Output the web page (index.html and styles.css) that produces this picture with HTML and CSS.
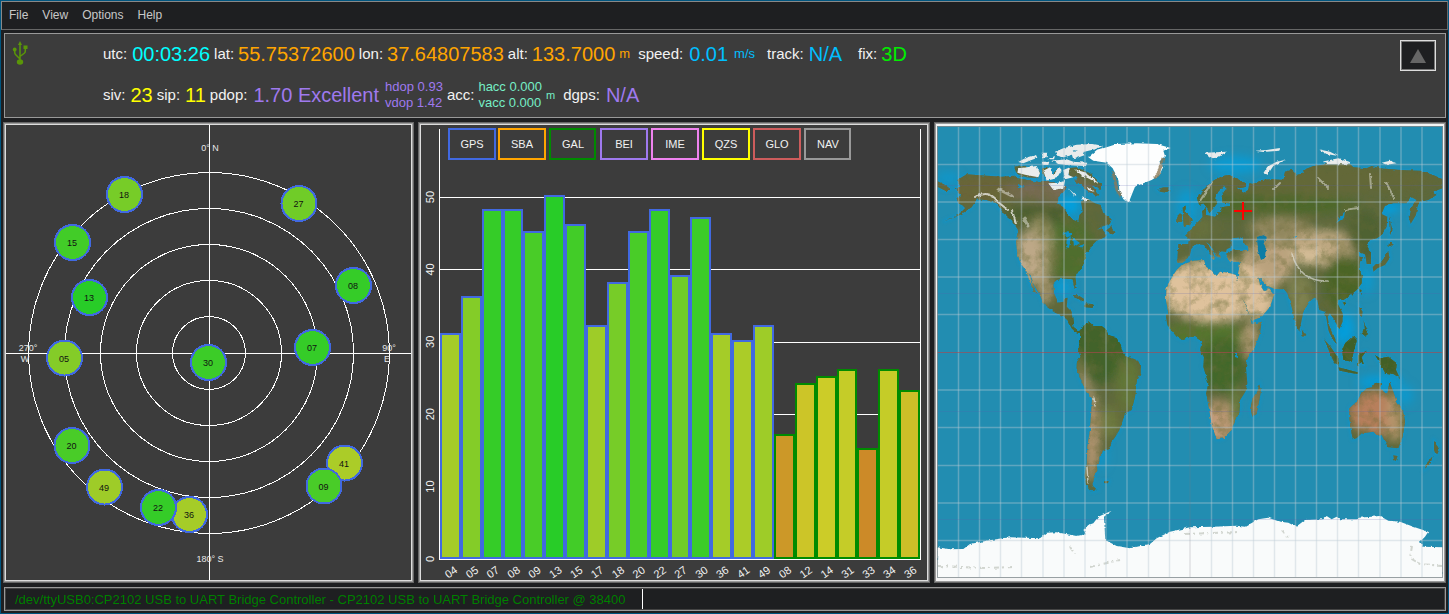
FILE: index.html
```html
<!DOCTYPE html>
<html lang="en">
<head>
<meta charset="utf-8">
<title>GNSS Monitor</title>
<link rel="stylesheet" href="styles.css">
</head>
<body>
<nav class="menubar">
  <button class="menu" type="button">File</button>
  <button class="menu" type="button">View</button>
  <button class="menu" type="button">Options</button>
  <button class="menu" type="button">Help</button>
</nav>

<header class="banner">
  <svg class="usb" viewBox="0 0 16 25" aria-label="USB connected">
    <g fill="none" stroke="#5a9608" stroke-width="1.500">
      <path d="M8 3V20M8 18L3.500 13.500Q2.700 12.700 2.700 11V9M8 15.500L12.500 12Q13.300 11.200 13.300 10V7"/>
    </g>
    <g fill="#5a9608">
      <path d="M8 0L10 4H6Z"/><circle cx="2.700" cy="8.500" r="1.900"/><rect x="11.500" y="4.500" width="4" height="3.500"/><ellipse cx="8" cy="21" rx="3.200" ry="2.700"/>
    </g>
  </svg>
  <div class="readings">
    <div class="row">
      <span class="field loose"><span>utc:</span><b class="cyan">00:03:26</b></span>
      <span class="field"><span>lat:</span><b class="orange">55.75372600</b></span>
      <span class="field"><span>lon:</span><b class="orange">37.64807583</b></span>
      <span class="field unit-near"><span>alt:</span><b class="orange">133.7000</b><small class="orange">m</small></span>
      <span class="field looser unit-far"><span>speed:</span><b class="sky">0.01</b><small class="sky">m/s</small></span>
      <span class="field loose wide"><span>track:</span><b class="sky">N/A</b></span>
      <span class="field"><span>fix:</span><b class="green">3D</b></span>
    </div>
    <div class="row">
      <span class="field loose"><span>siv:</span><b class="yellow">23</b></span>
      <span class="field loose"><span>sip:</span><b class="yellow">11</b></span>
      <span class="field looser"><span>pdop:</span><b class="purple">1.70 Excellent</b><span class="pair purple"><span>hdop 0.93</span><span>vdop 1.42</span></span></span>
      <span class="field unit-near"><span>acc:</span><span class="pair aqua"><span>hacc 0.000</span><span>vacc 0.000</span></span><small class="tiny aqua">m</small></span>
      <span class="field looser"><span>dgps:</span><b class="purple">N/A</b></span>
    </div>
  </div>
  <button class="toggle" type="button" aria-label="Hide details"><svg viewBox="0 0 16 14"><path d="M8 0L16 14H0Z" fill="#666"/></svg></button>
</header>

<main class="widgets">
  <section class="panel" aria-label="Satellite view">
    <svg id="sky" class="plot" viewBox="6 125 405 455">
      <g class="grid-line">
        <path d="M209.500 125V580M6 353.500H411"/>
        <circle cx="209" cy="353" r="36.500"/><circle cx="209" cy="353" r="72.500"/><circle cx="209" cy="353" r="108.500"/><circle cx="209" cy="353" r="144.500"/><circle cx="209" cy="353" r="180.500"/>
      </g>
      <g class="compass">
        <text x="210" y="151">0° N</text><text x="210" y="562">180° S</text>
        <text x="28" y="351">270°</text><text x="25" y="362">W</text>
        <text x="389" y="351">90°</text><text x="387" y="362">E</text>
      </g>
    </svg>
  </section>

  <section class="panel" aria-label="Signal levels">
    <svg id="levels" class="plot" viewBox="421 125 506 455">
      <path class="grid-line" d="M439.500 129V559.500H920.500V129M440 197.500H920M440 269.500H920M440 342.500H920M440 414.500H920M440 486.500H920"/>
    </svg>
  </section>

  <section class="panel map-panel" aria-label="World map">
    <svg class="map" viewBox="937 126 506 452" preserveAspectRatio="none">
      <defs>
        <path id="namerica" transform="translate(930 120) scale(.33333)" d="M82 180L110 163L150 166L215 170L255 167L262 175L320 185L345 183L385 190L410 205L385 232L383 250L400 262L415 285L430 300L445 306L448 285L458 275L453 245L470 235L495 250L512 255L520 280L545 298L540 312L515 320L500 330L515 325L530 345L525 352L500 362L490 372L478 390L468 400L462 430L445 455L436 470L440 505L434 508L428 478L400 475L380 480L370 490L372 520L385 548L400 545L402 535L413 533L410 560L425 575L428 600L430 620L445 632L455 632L452 642L440 640L425 625L412 600L400 590L375 578L342 555L330 525L312 495L302 465L296 460L310 495L320 523L312 515L300 490L290 455L272 430L262 400L258 365L264 330L245 300L220 280L200 250L170 240L140 238L125 262L90 285L40 305L85 284L108 262L85 250L80 235L95 225L75 205L92 200ZM22 183L45 195L62 208L50 214L22 200ZM530 330L545 318L547 330L558 340L540 345ZM682 208L700 202L715 202L722 210L708 218L690 215ZM425 525L445 526L464 538L458 546L440 533ZM466 550L490 553L488 564L466 562ZM738 305L742 288L750 280L757 285L753 305Z"/>
        <path id="baffin" transform="translate(930 120) scale(.33333)" d="M410 145L440 142L480 160L518 195L512 208L485 195L508 225L498 230L470 210L455 195L435 185L440 170L420 170ZM252 140L275 135L300 145L330 155L325 175L290 172L260 162ZM335 150L350 140L370 160L385 145L380 165L360 180L345 172Z"/>
        <path id="samerica" transform="translate(930 350) scale(.33333)" d="M450 -52L460 -72L478 -84L490 -72L515 -72L528 -62L535 -45L558 -38L570 -20L578 5L590 20L615 28L633 45L632 70L620 95L615 140L605 180L585 190L577 215L568 240L555 262L545 275L540 292L518 302L515 315L508 320L508 335L500 345L502 362L492 378L490 395L486 405L502 420L485 424L468 405L464 375L470 340L472 290L480 240L484 180L486 145L468 125L455 95L440 55L441 35L452 20L443 -5L450 -25ZM522 394L536 393L534 400L524 400Z"/>
        <path id="eurasia" transform="translate(1180 120) scale(.33333)" d="M52 240L55 225L75 205L95 185L120 170L148 165L195 188L198 200L180 205L165 200L190 218L205 210L208 190L220 192L245 180L275 178L310 180L315 155L335 150L350 165L372 160L370 150L400 138L440 133L510 132L520 142L560 145L575 138L600 145L660 150L720 152L760 165L788 178L788 205L760 215L770 225L745 240L718 245L712 262L708 285L692 312L686 290L690 265L710 240L695 232L680 250L640 250L615 258L605 282L622 290L620 320L605 345L590 355L570 360L560 375L573 400L573 432L560 432L556 405L545 400L535 398L538 410L550 412L540 425L538 440L545 465L545 490L530 510L505 530L490 540L475 538L472 550L488 580L488 605L478 628L468 610L455 590L450 580L443 590L448 620L465 655L470 672L455 655L445 630L440 600L435 575L418 570L412 540L400 535L388 545L370 575L363 610L358 635L348 615L335 560L322 520L312 508L285 507L262 497L250 485L235 472L240 495L252 514L264 505L282 525L270 560L245 590L215 602L205 575L185 530L172 495L174 465L180 430L178 425L150 425L140 410L145 395L165 390L205 390L205 380L190 368L188 352L155 355L155 380L140 388L138 396L118 393L122 415L108 408L90 375L78 365L100 398L97 410L72 375L50 372L35 385L28 410L15 420L5 428L-5 428L-8 415L-5 372L25 372L28 358L15 345L40 320L60 300L68 290L65 270L78 265L78 285L105 290L120 275L125 262L150 258L150 250L128 248L125 225L140 205L135 195L115 215L105 235L115 245L100 265L88 280L80 262L70 250L58 255ZM8 262L18 260L14 275L22 282L38 300L30 315L12 320L10 300Z"/>
        <path id="islands" transform="translate(1180 120) scale(.33333)" d="M625 392L629 415L615 435L592 445L580 455L578 440L600 430L615 410ZM628 362L642 372L632 382L625 378ZM627 288L632 310L638 330L630 345ZM538 508L545 510L541 526ZM488 545L497 542L494 557ZM365 628L376 645L368 652ZM538 560L548 575L546 592L538 582ZM550 600L562 630L558 650L545 640L555 625ZM487 690L495 670L520 648L530 660L520 700L515 725L490 720ZM432 658L450 678L475 715L475 740L460 722ZM475 742L530 756L530 762L478 752ZM535 705L560 692L545 712L552 735L540 725L535 740ZM585 705L600 715L625 710L650 730L648 750L660 775L640 762L615 758L600 730ZM92 412L105 410L102 420Z"/>
        <path id="africa" transform="translate(1180 120) scale(.33333)" d="M5 435L40 422L72 420L78 440L95 452L110 468L120 455L150 460L168 465L175 495L190 545L210 590L215 612L245 605L240 640L225 680L200 720L198 745L202 790L196 815L180 840L178 880L165 900L155 930L130 955L110 958L95 915L88 870L78 820L85 790L70 740L72 712L60 690L67 665L45 650L30 650L10 660L-10 650L-38 615L-42 590L-35 580L-42 540L-40 500L-20 465L-10 450ZM238 793L243 812L230 882L217 890L211 865L218 835L232 815Z"/>
        <path id="australia" transform="translate(1180 350) scale(.33333)" d="M508 175L530 155L545 130L560 115L575 112L585 98L605 100L600 115L622 135L628 93L640 125L650 155L670 185L675 215L668 260L655 295L625 292L612 270L605 255L595 258L580 245L545 250L530 265L518 268L512 235L508 205ZM640 316L653 318L648 333L642 330ZM762 272L778 292L768 315L762 300ZM758 318L752 340L735 356L740 340Z"/>
        <path id="greenland" transform="translate(930 120) scale(.33333)" d="M475 112L500 90L530 82L560 72L620 70L680 72L722 84L700 92L705 108L688 125L700 140L688 165L665 180L640 190L615 200L605 225L597 245L580 238L568 212L565 180L548 145L530 128L490 122Z"/>
        <path id="arctic" transform="translate(930 120) scale(.33333)" d="M265 126L285 115L318 105L322 113L280 130ZM335 98L352 98L350 112L338 112ZM352 118L375 108L372 118ZM375 95L400 85L425 88L440 100L400 112L385 108ZM400 85L440 74L490 72L520 78L495 88L460 96L465 105L430 118L425 102L440 92ZM365 122L410 118L430 125L472 128L468 138L420 136L385 132ZM335 125L358 125L355 135L338 135ZM265 145L320 138L330 160L325 172L285 164L262 158ZM340 152L360 142L370 165L388 142L395 150L380 175L350 182ZM400 150L420 142L415 165L430 172L405 178ZM432 148L470 158L508 192L480 178L455 165ZM470 200L495 217L475 210ZM415 205L440 228L432 225ZM355 190L385 188L405 182L400 205L370 210ZM455 232L480 240L465 245ZM825 98L890 95L855 118L840 110ZM1000 160L1012 140L1040 125L1068 118L1030 138L1012 165ZM1165 88L1200 95L1225 108L1190 102ZM1175 125L1225 115L1258 125L1255 133L1190 133ZM975 92L1010 90L1050 84L1048 92L1000 96ZM1355 128L1380 122L1400 130L1370 134Z"/>
        <path id="antarctica" transform="translate(930 350) scale(.33333)" d="M22 592L60 598L100 597L120 582L170 572L240 562L330 565L350 548L380 547L440 558L470 552L460 540L475 525L490 520L505 500L545 482L522 500L526 570L560 588L600 595L660 582L680 565L720 545L780 532L850 530L920 527L945 530L985 508L1015 503L1050 515L1075 518L1098 530L1125 510L1180 508L1190 498L1205 508L1220 500L1230 508L1280 508L1290 503L1350 498L1375 512L1410 515L1450 530L1495 545L1485 560L1470 575L1480 590L1540 592V700H20Z"/>
        <g id="land"><use href="#namerica"/><use href="#baffin"/><use href="#samerica"/><use href="#eurasia"/><use href="#islands"/><use href="#africa"/><use href="#australia"/></g>
        <clipPath id="land-clip"><use href="#namerica"/><use href="#baffin"/><use href="#samerica"/><use href="#eurasia"/><use href="#islands"/><use href="#africa"/><use href="#australia"/></clipPath>
        <filter id="soft" x="-30%" y="-30%" width="160%" height="160%"><feGaussianBlur stdDeviation="5"/></filter>
        <filter id="shelf"><feGaussianBlur stdDeviation="1.500"/></filter>
        <filter id="rough" filterUnits="userSpaceOnUse" x="937" y="126" width="506" height="452"><feTurbulence type="fractalNoise" baseFrequency=".25" numOctaves="2" seed="4" result="n"/><feDisplacementMap in="SourceGraphic" in2="n" scale="3" xChannelSelector="R" yChannelSelector="G"/><feGaussianBlur stdDeviation=".3"/></filter>
        <filter id="relief" filterUnits="userSpaceOnUse" x="937" y="126" width="506" height="452"><feTurbulence type="fractalNoise" baseFrequency=".08" numOctaves="5" seed="8"/><feColorMatrix values="0 0 0 0 .14  0 0 0 0 .15  0 0 0 0 .04  2.600 0 0 0 -1.100"/></filter>
      </defs>

      <rect x="937" y="126" width="506" height="452" fill="#228db1"/>
      <g filter="url(#soft)" fill="#06a0e0">
        <ellipse cx="1070" cy="205" rx="10" ry="10"/><ellipse cx="1235" cy="165" rx="26" ry="9" opacity=".7"/><ellipse cx="1187" cy="207" rx="10" ry="18" opacity=".6"/><ellipse cx="1062" cy="287" rx="10" ry="8" opacity=".7"/><ellipse cx="948" cy="178" rx="12" ry="7" opacity=".5"/><ellipse cx="1344" cy="329" rx="10" ry="16" opacity=".9"/><ellipse cx="1366" cy="280" rx="7" ry="14" opacity=".6"/><ellipse cx="1380" cy="382" rx="22" ry="6" opacity=".9"/><ellipse cx="1405" cy="395" rx="8" ry="10" opacity=".6"/><ellipse cx="1388" cy="208" rx="12" ry="5"/><ellipse cx="1102" cy="455" rx="6" ry="14" opacity=".4"/>
      </g>
      <g filter="url(#shelf)" fill="none" stroke="#0798d5" stroke-width="8" opacity=".6"><use href="#land"/></g>

      <g filter="url(#rough)">
        <g clip-path="url(#land-clip)">
          <rect x="937" y="126" width="506" height="452" fill="#5c683c"/>
          <g filter="url(#soft)">
            <ellipse cx="985" cy="190" rx="45" ry="14" fill="#6b6538"/>
            <ellipse cx="1050" cy="190" rx="45" ry="12" fill="#776c52"/>
            <ellipse cx="1040" cy="215" rx="35" ry="9" fill="#4c5f2d"/>
            <ellipse cx="1070" cy="250" rx="25" ry="32" fill="#4f6e2f"/>
            <ellipse cx="1040" cy="250" rx="14" ry="34" fill="#948f62"/>
            <ellipse cx="1029" cy="258" rx="15" ry="26" fill="#bda887"/>
            <ellipse cx="1045" cy="290" rx="8" ry="14" fill="#ad9975"/>
            <ellipse cx="1098" cy="345" rx="35" ry="38" fill="#42642a"/>
            <ellipse cx="1128" cy="385" rx="12" ry="28" fill="#647738"/>
            <ellipse cx="1092" cy="440" rx="7" ry="42" fill="#b59672"/>
            <ellipse cx="1110" cy="422" rx="10" ry="16" fill="#6e7a3f"/>
            <path d="M1073 350L1088 402L1098 404L1083 370Z" fill="#b49b77"/>
            <ellipse cx="1190" cy="228" rx="25" ry="15" fill="#66703e"/>
            <ellipse cx="1310" cy="180" rx="130" ry="14" fill="#646838"/>
            <ellipse cx="1270" cy="205" rx="90" ry="10" fill="#4d672b"/>
            <ellipse cx="1280" cy="228" rx="32" ry="11" fill="#93885e"/>
            <ellipse cx="1268" cy="262" rx="26" ry="24" fill="#baa27d"/>
            <ellipse cx="1322" cy="248" rx="38" ry="18" fill="#bca67f"/>
            <ellipse cx="1310" cy="256" rx="18" ry="8" fill="#d6be98"/>
            <ellipse cx="1300" cy="295" rx="13" ry="22" fill="#7e8150"/>
            <ellipse cx="1344" cy="282" rx="20" ry="28" fill="#4b6528"/>
            <ellipse cx="1365" cy="234" rx="18" ry="24" fill="#4f6232"/>
            <ellipse cx="1375" cy="352" rx="45" ry="26" fill="#3f6128"/>
            <ellipse cx="1213" cy="290" rx="54" ry="31" fill="#dfc29c"/>
            <ellipse cx="1258" cy="298" rx="17" ry="22" fill="#dcbf99"/>
            <ellipse cx="1205" cy="335" rx="45" ry="14" fill="#55752d"/>
            <ellipse cx="1223" cy="365" rx="22" ry="28" fill="#436829"/>
            <ellipse cx="1250" cy="340" rx="8" ry="18" fill="#b29b75"/>
            <ellipse cx="1218" cy="422" rx="17" ry="22" fill="#c09a77"/>
            <ellipse cx="1236" cy="407" rx="7" ry="22" fill="#687b40"/>
            <ellipse cx="1256" cy="402" rx="5" ry="16" fill="#9b8560"/>
            <ellipse cx="1376" cy="413" rx="27" ry="22" fill="#b77f5c"/>
            <ellipse cx="1394" cy="417" rx="8" ry="25" fill="#b6956c"/>
            <ellipse cx="1404" cy="420" rx="4" ry="24" fill="#6b733f"/>
          </g>
          <rect x="937" y="126" width="506" height="452" filter="url(#relief)" opacity=".5"/>
          <g fill="none" stroke="#e8e8e2" stroke-linecap="round">
            <path d="M975 197Q990 189 998 202L1008 210M1012 210L1016 224" stroke-width="2" opacity=".8"/><path d="M998 189L1012 196M1024 218L1028 226" stroke-width="3" opacity=".5"/>
            <path d="M1292 254Q1300 282 1328 281" stroke-width="1.500" opacity=".6"/><path d="M1094 398L1095 406M1087 467L1088 483" stroke-width="1.500" opacity=".7"/><path d="M1200 201L1212 182M1318 178L1328 188M1386 182L1394 198M1370 174L1371 188M1345 210L1358 208M1274 189L1280 183" stroke-width="2" opacity=".5"/>
          </g>
        </g>
        <g fill="#0f91c5">
          <path d="M1257 237L1263 235L1267 237L1263 242L1266 248L1265 258L1261 260L1258 251Z" fill="#0d7da6"/>
          <path d="M1062 234L1068 231L1072 234L1069 237ZM1067 239L1071 236L1069 248L1066 247ZM1073 238L1080 243L1074 247ZM1078 246L1085 244L1082 248ZM1336 223L1345 211L1344 218ZM1293 236L1297 236L1296 238ZM1235 353L1238 353L1238 358L1235 357ZM1018 184L1025 187L1018 188Z"/>
        </g>
        <use href="#greenland" fill="#fdfefe"/>
        <use href="#arctic" fill="#e9ecec"/>
        <use href="#antarctica" fill="#f9fbfb"/>
        <g fill="none" stroke="#8d7a58" stroke-width="3" opacity=".8"><path d="M1113 172L1117 190L1121 196M1163 158L1158 175L1154 178"/></g>
        <path d="M938 566L985 568L1014 567M1090 567L1120 560M1070 547L1075 554M1185 534L1240 532M1282 530L1288 537M1412 546L1410 558L1420 564L1442 566" fill="none" stroke="#a9b0a4" stroke-width="2" stroke-dasharray="5 3 2 4" opacity=".5"/>
      </g>

      <g fill="none" stroke="#bccbd4" stroke-opacity=".4" stroke-width="1.500">
        <path d="M958.500 127V577M979.500 127V577M1000.500 127V577M1021.500 127V577M1043 127V577M1064 127V577M1085 127V577M1106 127V577M1127 127V577M1148.500 127V577M1169.500 127V577M1211.500 127V577M1232.500 127V577M1253.500 127V577M1274.500 127V577M1295.500 127V577M1316.500 127V577M1337.500 127V577M1358.500 127V577M1380 127V577M1401 127V577M1422 127V577"/>
        <path d="M937 164.500H1443M937 202H1443M937 239.500H1443M937 277H1443M937 314.500H1443M937 390H1443M937 427.500H1443M937 465.500H1443M937 503H1443M937 540.500H1443"/>
      </g>
      <path d="M1190 127V577" stroke="#778" stroke-opacity=".3"/>
      <path d="M937 352.500H1443" stroke="#b0464c" stroke-opacity=".6"/>
      <path d="M937 293.500H1443M937 411.500H1443M937 185.500H1443M937 519.500H1443" stroke="#5b5fae" stroke-opacity=".2"/>
      <rect x="937.500" y="126.500" width="505" height="451" fill="none" stroke="#808a8d" stroke-opacity=".8"/>
      <path d="M1234 211H1252M1243 202V220" stroke="#f00" stroke-width="2"/>
    </svg>
  </section>
</main>

<footer class="status"><span class="port">/dev/ttyUSB0:CP2102 USB to UART Bridge Controller - CP2102 USB to UART Bridge Controller @ 38400</span></footer>
<script src="plots.js"></script>
</body>
</html>
```

FILE: styles.css
```css
* { box-sizing: border-box; }

body {
  margin: 0;
  height: 100vh;
  min-height: 400px;
  display: flex;
  flex-direction: column;
  border: 1px solid #00557f;
  padding-bottom: 2px;
  background: #1e1f21;
  color: #f2f2f2;
  font-family: "Liberation Sans", Arial, sans-serif;
}

button { font: inherit; color: inherit; background: none; border: 0; padding: 0; }

.menubar {
  display: flex;
  align-items: center;
  gap: 14px;
  height: 29px;
  padding: 0 7px 2px;
  border: 1px solid #666;
  border-top-color: #888;
  border-left-color: #888;
}

.menu { font-size: 12px; line-height: 16px; color: #c8c8c8; }

.banner {
  display: grid;
  grid-template-columns: 98px 1fr auto;
  align-items: start;
  margin: 3px 2px 4px 3px;
  padding-right: 9px;
  padding-bottom: 1px;
  border: 1px solid #999;
  background: #3c3c3c;
}

.usb { width: 16px; height: 25px; margin: 7px 0 0 7px; }

.row { display: flex; align-items: center; gap: 4px; height: 41px; padding-bottom: 1px; }

.field { display: flex; align-items: center; gap: 4px; font-size: 15px; line-height: 20px; white-space: nowrap; }
.field b { font-size: 20px; font-weight: normal; }
.field small { font-size: 13px; }
.field .tiny { font-size: 11px; }
.loose { gap: 5px; }
.looser { gap: 6px; }
.unit-near { margin-right: 4px; }
.unit-far { margin-right: 8px; }
.wide { margin-right: 12px; }

.pair { display: flex; flex-direction: column; font-size: 13px; line-height: 16px; }

.cyan { color: #0ff; }
.orange { color: #ffa500; }
.sky { color: #00bfff; }
.green { color: #00ee00; }
.yellow { color: #ff0; }
.purple { color: #9f79ee; }
.aqua { color: #76eec6; }

.toggle {
  display: grid;
  place-items: center;
  width: 36px;
  height: 31px;
  margin-top: 6px;
  border: 1px solid #ddd;
  background: #1e1f21;
  box-shadow: inset 0 0 0 1px #777;
}
.toggle svg { width: 16px; height: 14px; }

.widgets {
  flex: 1;
  min-height: 0;
  display: grid;
  grid-template-columns: 411fr 512fr 512fr;
  grid-template-rows: minmax(0, 1fr);
  gap: 4px;
  margin: 0 2px 4px;
}

.panel {
  display: flex;
  min-width: 0;
  border: 1px solid #666;
  outline: 1px solid #999;
  outline-offset: -2px;
  padding: 2px;
  background: #3c3c3c;
  box-shadow: inset 0 0 0 2px #ddd;
}

.plot, .map { display: block; flex: 1; min-width: 0; width: 100%; height: 100%; }
.map-panel { padding: 3px 2px 4px; box-shadow: inset 0 0 0 4px #f4f4f4; }

.grid-line { fill: none; stroke: #fff; stroke-width: 1; shape-rendering: crispEdges; }
.compass text, .sat text { font-size: 9px; text-anchor: middle; }
.compass text { fill: #e8e8e8; }
.sat circle { stroke: #4169e1; stroke-width: 2; shape-rendering: crispEdges; }
.sat text { fill: #111; }
.bar, .key rect { stroke-width: 2; shape-rendering: crispEdges; }
.key rect { fill: #3c3c3c; }
.key text, .tick { font-size: 11px; text-anchor: middle; fill: #f2f2f2; }

.status {
  display: flex;
  height: 24px;
  margin: 0 2px 0 3px;
  padding-left: 10px;
  border: 1px solid #999;
  outline: 1px solid #444;
  outline-offset: -2px;
}

.port {
  margin: 1px 0;
  padding-right: 16px;
  border-right: 1px solid #fff;
  font-size: 13px;
  line-height: 22px;
  color: #008000;
  white-space: nowrap;
}
```

FILE: plots.js
```js
const NS = "http://www.w3.org/2000/svg";

function add(parent, tag, attrs, text) {
  const node = document.createElementNS(NS, tag);
  for (const key in attrs) node.setAttribute(key, attrs[key]);
  if (text !== undefined) node.textContent = text;
  parent.appendChild(node);
  return node;
}

// Signal strength to colour: red-orange when weak, green when strong.
function snrColor(snr) {
  const step = 164 / 25;
  const r = snr >= 25 ? Math.round(40 + (50 - snr) * step) : 204;
  const g = snr >= 25 ? 204 : Math.round(40 + snr * step);
  return `rgb(${r},${g},40)`;
}

const satellites = [
  ["41", 344.5, 463, 30], ["36", 189.5, 514.5, 31], ["49", 104.5, 487, 32],
  ["18", 124.5, 194.5, 38], ["27", 299, 203.5, 39], ["15", 72.5, 242.5, 46],
  ["13", 89.5, 297.5, 50], ["08", 353.5, 285.5, 48], ["07", 312.5, 347.5, 48],
  ["05", 64.5, 358, 36], ["30", 208.5, 362.5, 47], ["20", 72, 445.5, 45],
  ["22", 158.5, 507.5, 48], ["09", 324, 486, 45]
];
const sky = document.getElementById("sky");
for (const [id, x, y, snr] of satellites) {
  const g = add(sky, "g", { class: "sat" });
  add(g, "circle", { cx: x, cy: y, r: 17.5, fill: snrColor(snr) });
  add(g, "text", { x: x - 0.5, y: y + 3.5 }, id);
}

const levels = document.getElementById("levels");
const GPS = "#4169e1", GAL = "#008b00";
const signals = [
  ["04", 31, GPS], ["05", 36, GPS], ["07", 48, GPS], ["08", 48, GPS], ["09", 45, GPS],
  ["13", 50, GPS], ["15", 46, GPS], ["17", 32, GPS], ["18", 38, GPS], ["20", 45, GPS],
  ["22", 48, GPS], ["27", 39, GPS], ["30", 47, GPS], ["36", 31, GPS], ["41", 30, GPS],
  ["49", 32, GPS], ["08", 17, GAL], ["12", 24, GAL], ["14", 25, GAL], ["31", 26, GAL],
  ["33", 15, GAL], ["34", 26, GAL], ["36", 23, GAL]
];
const pitch = 480 / signals.length;
signals.forEach(([id, snr, stroke], i) => {
  const left = Math.round(440 + i * pitch) + 1;
  const right = Math.round(440 + (i + 1) * pitch) - 1;
  const top = Math.round(558 - snr * 7.24);
  add(levels, "rect", {
    class: "bar", x: left, y: top, width: right - left, height: 558 - top,
    fill: snrColor(snr), stroke
  });
  const x = 451 + i * pitch;
  add(levels, "text", { class: "tick", x, y: 576, transform: `rotate(-35 ${x} 572)` }, id);
});

[0, 10, 20, 30, 40, 50].forEach((v) => {
  const y = 559 - v * 7.24;
  add(levels, "text", { class: "tick", x: 430, y: y + 4, transform: `rotate(-90 430 ${y})` }, v);
});

const systems = [
  ["GPS", GPS], ["SBA", "#ffa500"], ["GAL", GAL], ["BEI", "#9f79ee"],
  ["IME", "#ee82ee"], ["QZS", "#ffff00"], ["GLO", "#cd5c5c"], ["NAV", "#999999"]
];
systems.forEach(([name, stroke], i) => {
  const x = Math.floor(449 + i * 50.9);
  const width = i % 5 === 2 ? 45 : 46;
  const g = add(levels, "g", { class: "key" });
  add(g, "rect", { x, y: 129, width, height: 30, stroke });
  add(g, "text", { x: x + 23, y: 148 }, name);
});
```
